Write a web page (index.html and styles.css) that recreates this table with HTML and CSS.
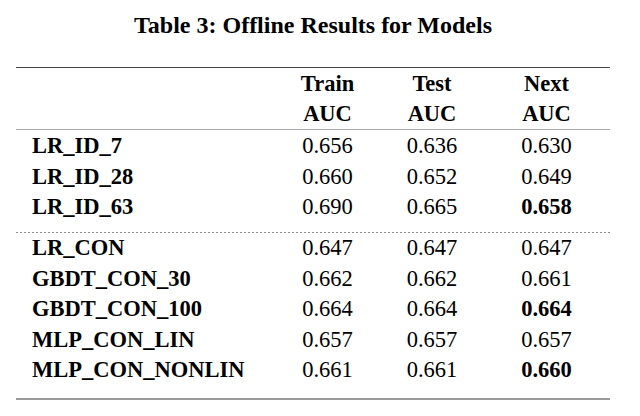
FILE: index.html
```html
<!DOCTYPE html>
<html lang="en">
<head>
<meta charset="utf-8">
<title>Table 3: Offline Results for Models</title>
<link rel="stylesheet" href="styles.css">
</head>
<body>
<div class="page">
  <h1 class="caption">Table 3: Offline Results for Models</h1>
  <div class="table">
    <div class="group head">
      <div class="row">
        <div class="cell label"></div>
        <div class="cell num">Train</div>
        <div class="cell num">Test</div>
        <div class="cell num">Next</div>
      </div>
      <div class="row">
        <div class="cell label"></div>
        <div class="cell num">AUC</div>
        <div class="cell num">AUC</div>
        <div class="cell num">AUC</div>
      </div>
    </div>
    <div class="group body first">
      <div class="row">
        <div class="cell label">LR_ID_7</div>
        <div class="cell num">0.656</div>
        <div class="cell num">0.636</div>
        <div class="cell num">0.630</div>
      </div>
      <div class="row">
        <div class="cell label">LR_ID_28</div>
        <div class="cell num">0.660</div>
        <div class="cell num">0.652</div>
        <div class="cell num">0.649</div>
      </div>
      <div class="row">
        <div class="cell label">LR_ID_63</div>
        <div class="cell num">0.690</div>
        <div class="cell num">0.665</div>
        <div class="cell num best">0.658</div>
      </div>
    </div>
    <div class="dotted"></div>
    <div class="group body last">
      <div class="row">
        <div class="cell label">LR_CON</div>
        <div class="cell num">0.647</div>
        <div class="cell num">0.647</div>
        <div class="cell num">0.647</div>
      </div>
      <div class="row">
        <div class="cell label">GBDT_CON_30</div>
        <div class="cell num">0.662</div>
        <div class="cell num">0.662</div>
        <div class="cell num">0.661</div>
      </div>
      <div class="row">
        <div class="cell label">GBDT_CON_100</div>
        <div class="cell num">0.664</div>
        <div class="cell num">0.664</div>
        <div class="cell num best">0.664</div>
      </div>
      <div class="row">
        <div class="cell label">MLP_CON_LIN</div>
        <div class="cell num">0.657</div>
        <div class="cell num">0.657</div>
        <div class="cell num">0.657</div>
      </div>
      <div class="row">
        <div class="cell label">MLP_CON_NONLIN</div>
        <div class="cell num">0.661</div>
        <div class="cell num">0.661</div>
        <div class="cell num best">0.660</div>
      </div>
    </div>
  </div>
</div>
</body>
</html>
```

FILE: styles.css
```css
html, body {
  margin: 0;
  padding: 0;
  background: #ffffff;
}

body {
  font-family: "Liberation Serif", "Times New Roman", serif;
  color: #000000;
}

.page {
  padding: 10px 0 0 16px;
  width: 594px;
}

.caption {
  margin: 0;
  font-size: 24px;
  line-height: 30px;
  font-weight: bold;
  text-align: center;
}

.table {
  margin-top: 27px;
  border-top: 1px solid #444444;
  font-size: 22.5px;
}

.head {
  padding-top: 1px;
  border-bottom: 1px solid #a8a8a8;
  font-weight: bold;
}

.head .row {
  line-height: 30px;
}

.row {
  display: grid;
  grid-template-columns: 258px 107px 102px 127px;
  line-height: 30.5px;
}

.cell.label {
  padding-left: 16px;
  font-weight: bold;
}

.cell.num {
  text-align: center;
}

.cell.best {
  font-weight: bold;
}

.body.first {
  padding-top: 1px;
  padding-bottom: 9.5px;
}

.dotted {
  height: 1px;
  background: repeating-linear-gradient(to right, #8c8c8c 0 2px, transparent 2px 4px);
}

.body.last {
  padding-bottom: 12.5px;
  border-bottom: 2px solid #9a9a9a;
}
```
